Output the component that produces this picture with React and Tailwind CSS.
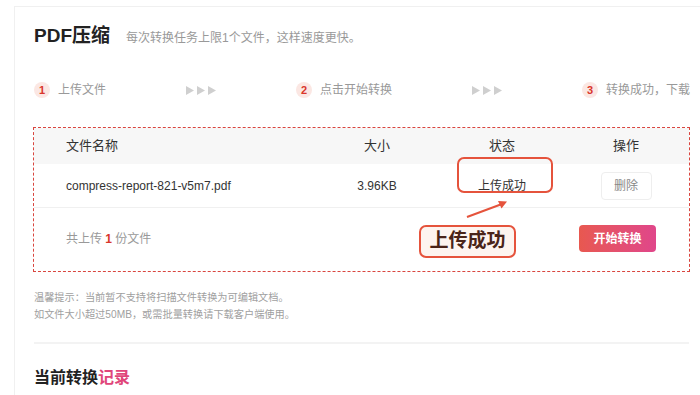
import React from "react";

const font = { fontFamily: '"Liberation Sans", "Noto Sans CJK SC", sans-serif' };

function Step({ n, text }) {
  return (
    <div className="flex items-center gap-[8px] shrink-0 whitespace-nowrap">
      <div className="w-[16px] h-[16px] rounded-full bg-[#fbe7e3] text-[#d9362b] text-[11px] font-bold flex items-center justify-center">
        {n}
      </div>
      <span className="text-[12px] text-[#999]">{text}</span>
    </div>
  );
}

function Arrows() {
  return (
    <div className="flex items-center gap-[3px] shrink-0">
      {[0, 1, 2].map((i) => (
        <svg key={i} width="8" height="9" viewBox="0 0 8 9">
          <path d="M0 0 L8 4.5 L0 9 Z" fill="#cfcfcf" />
        </svg>
      ))}
    </div>
  );
}

export default function App() {
  return (
    <div className="w-[700px] h-[395px] overflow-hidden bg-white" style={font}>
      <div className="ml-[14px] mt-[6px] w-[720px] h-[400px] border-l border-t border-[#f0f0f0] pl-[19px] pt-[15px]">
        <div className="flex items-center h-[28px]">
          <span className="text-[19px] font-bold text-[#222]">PDF压缩</span>
          <span className="ml-[16px] text-[12px] text-[#999] mt-[3px]">每次转换任务上限1个文件，这样速度更快。</span>
        </div>

        <div className="mt-[30px]">
          <div className="flex items-center h-[20px] gap-[80px]">
            <Step n="1" text="上传文件" />
            <Arrows />
            <Step n="2" text="点击开始转换" />
            <Arrows />
            <Step n="3" text="转换成功，下载" />
          </div>
        </div>

        <div className="relative ml-[-1px] mt-[27px] w-[657px] h-[145px] border border-dashed border-[#d9463f]">
          <div className="grid grid-cols-[254px_114px_136px_112px] pl-[32px] h-[36px] items-center bg-[#f7f7f7] text-[13px] text-[#333]">
            <div>文件名称</div>
            <div className="text-center">大小</div>
            <div className="text-center">状态</div>
            <div className="text-center">操作</div>
          </div>
          <div className="grid grid-cols-[254px_114px_136px_112px] pl-[32px] h-[44px] items-center border-b border-[#f0f0f0] text-[12px] text-[#333]">
            <div>compress-report-821-v5m7.pdf</div>
            <div className="text-center">3.96KB</div>
            <div className="text-center">上传成功</div>
            <div className="flex justify-center">
              <div className="w-[51px] h-[28px] rounded-[4px] border border-[#eee] flex items-center justify-center text-[12px] text-[#888]">
                删除
              </div>
            </div>
          </div>
          <div className="flex items-center justify-between h-[61px] pl-[32px] pr-[33px]">
            <div className="text-[12px] text-[#999]">
              共上传 <span className="text-[#d9362b] font-bold">1</span> 份文件
            </div>
            <div className="w-[77px] h-[27px] rounded-[4px] bg-gradient-to-r from-[#e8584f] to-[#e0468a] text-white text-[12px] font-bold flex items-center justify-center">
              开始转换
            </div>
          </div>

          <div className="absolute left-[423px] top-[29px] w-[96px] h-[36px] rounded-[7px] border-2 border-[#e5533c]" />
          <svg className="absolute left-[428px] top-[68px]" width="50" height="26" viewBox="0 0 50 26">
            <line x1="5" y1="21" x2="40" y2="8" stroke="#e5533c" strokeWidth="2" />
            <path d="M45 5.5 L36 5 L39.5 12.5 Z" fill="#e5533c" />
          </svg>
          <div className="absolute left-[385px] top-[97px] w-[97px] h-[33px] rounded-[7px] border-2 border-[#e5533c] bg-[#fdf4ef] flex items-center justify-center text-[19px] font-bold text-[#4a2418]">
            上传成功
          </div>
        </div>

        <div className="mt-[17px] text-[10.2px] leading-[17px] text-[#a0a0a0]">
          <div>温馨提示：当前暂不支持将扫描文件转换为可编辑文档。</div>
          <div>如文件大小超过50MB，或需批量转换请下载客户端使用。</div>
        </div>

        <div className="mt-[19px] w-[655px] h-[2px] bg-[#f3f3f3]" />

        <div className="mt-[22px] text-[16px] leading-[24px] font-bold text-[#222]">
          当前转换<span className="text-[#e0457a]">记录</span>
        </div>
      </div>
    </div>
  );
}
